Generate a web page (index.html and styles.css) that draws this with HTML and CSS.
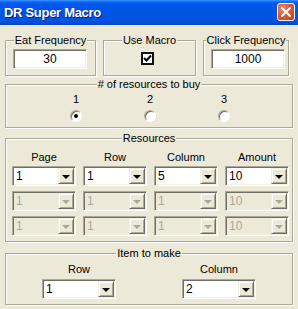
FILE: index.html
```html
<!DOCTYPE html>
<html lang="en">
<head>
    <meta charset="UTF-8">
    <meta name="viewport" content="width=device-width, initial-scale=1.0">
    <title>DR Super Macro</title>
    <link rel="stylesheet" href="styles.css">
</head>
<body>
    <div class="titlebar">
        <span class="title">DR Super Macro</span>
        <span class="close-btn">
            <svg width="10" height="10" viewBox="0 0 10 10"><path d="M1 1 L9 9 M9 1 L1 9" stroke="#fff" stroke-width="2" stroke-linecap="square"/></svg>
        </span>
    </div>

    <div class="client">
        <div class="top-row">
            <fieldset class="group group-eat">
                <legend>Eat Frequency</legend>
                <div class="edit">30</div>
            </fieldset>
            <fieldset class="group group-use">
                <legend>Use Macro</legend>
                <div class="checkbox">
                    <svg width="9" height="9" viewBox="0 0 9 9"><path d="M1 4 L3.5 6.5 L8 1.5" stroke="#000" stroke-width="2" fill="none"/></svg>
                </div>
            </fieldset>
            <fieldset class="group group-click">
                <legend>Click Frequency</legend>
                <div class="edit">1000</div>
            </fieldset>
        </div>

        <fieldset class="group group-buy">
            <legend># of resources to buy</legend>
            <div class="radio-grid">
                <div class="radio-item"><span class="caption">1</span><span class="radio checked"></span></div>
                <div class="radio-item"><span class="caption">2</span><span class="radio"></span></div>
                <div class="radio-item"><span class="caption">3</span><span class="radio"></span></div>
            </div>
        </fieldset>

        <fieldset class="group group-res">
            <legend>Resources</legend>
            <div class="res-grid">
                <span class="caption">Page</span>
                <span class="caption">Row</span>
                <span class="caption">Column</span>
                <span class="caption">Amount</span>

                <div class="combo"><span class="combo-text">1</span><span class="combo-btn"><i class="arrow"></i></span></div>
                <div class="combo"><span class="combo-text">1</span><span class="combo-btn"><i class="arrow"></i></span></div>
                <div class="combo"><span class="combo-text">5</span><span class="combo-btn"><i class="arrow"></i></span></div>
                <div class="combo"><span class="combo-text">10</span><span class="combo-btn"><i class="arrow"></i></span></div>

                <div class="combo disabled"><span class="combo-text">1</span><span class="combo-btn"><i class="arrow"></i></span></div>
                <div class="combo disabled"><span class="combo-text">1</span><span class="combo-btn"><i class="arrow"></i></span></div>
                <div class="combo disabled"><span class="combo-text">1</span><span class="combo-btn"><i class="arrow"></i></span></div>
                <div class="combo disabled"><span class="combo-text">10</span><span class="combo-btn"><i class="arrow"></i></span></div>

                <div class="combo disabled"><span class="combo-text">1</span><span class="combo-btn"><i class="arrow"></i></span></div>
                <div class="combo disabled"><span class="combo-text">1</span><span class="combo-btn"><i class="arrow"></i></span></div>
                <div class="combo disabled"><span class="combo-text">1</span><span class="combo-btn"><i class="arrow"></i></span></div>
                <div class="combo disabled"><span class="combo-text">10</span><span class="combo-btn"><i class="arrow"></i></span></div>
            </div>
        </fieldset>

        <fieldset class="group group-item">
            <legend>Item to make</legend>
            <div class="item-grid">
                <span class="caption">Row</span>
                <span class="caption">Column</span>
                <div class="combo"><span class="combo-text">1</span><span class="combo-btn"><i class="arrow"></i></span></div>
                <div class="combo"><span class="combo-text">2</span><span class="combo-btn"><i class="arrow"></i></span></div>
            </div>
        </fieldset>
    </div>
</body>
</html>
```

FILE: styles.css
```css
html, body {
    margin: 0;
    padding: 0;
}
body {
    width: 298px;
    height: 309px;
    overflow: hidden;
    background: #ECE9D8;
    font-family: "Liberation Sans", Arial, sans-serif;
    font-size: 11px;
    color: #000;
}

/* title bar */
.titlebar {
    height: 25px;
    display: flex;
    align-items: center;
    justify-content: space-between;
    padding: 0 3px 0 4px;
    box-sizing: border-box;
    background: linear-gradient(to bottom, #3D95FF 0, #0A66F5 2px, #0058EE 4px, #0055E6 40%, #0053E1 80%, #0049D0 100%);
}
.title {
    color: #fff;
    font-weight: bold;
    font-size: 13px;
    letter-spacing: -0.3px;
    text-shadow: 1px 1px 0 #0A1883;
    margin-top: -1px;
}
.close-btn {
    width: 18px;
    height: 18px;
    box-sizing: border-box;
    border: 1px solid #fff;
    border-radius: 3px;
    background: radial-gradient(circle at 30% 30%, #E9896E 0, #DB5A36 45%, #C63F17 100%);
    display: flex;
    align-items: center;
    justify-content: center;
    margin-top: -1px;
}

/* client area */
.client {
    padding: 9px 5px 0 5px;
}
.top-row {
    display: flex;
    align-items: flex-start;
}

.group {
    margin: 0;
    padding: 0;
    min-width: 0;
    border: 1px solid #ACA899;
    box-shadow: inset 1px 1px 0 #fff, 1px 1px 0 #fff;
}
.group legend {
    margin: 0 auto;
    padding: 0 1px;
    line-height: 13px;
    white-space: nowrap;
    background: #ECE9D8;
}

.group-eat,
.group-use,
.group-click {
    box-sizing: border-box;
    padding: 2px 0 6px 0;
}
.group-eat { width: 91px; }
.group-use { width: 93px; margin-left: 7px; }
.group-click { width: 86px; margin-left: 7px; }

.edit {
    width: 74px;
    height: 20px;
    margin-left: 7px;
    box-sizing: border-box;
    background: #fff;
    border: 1px solid;
    border-color: #ACA899 #fff #fff #ACA899;
    box-shadow: inset 1px 1px 0 #716F64, inset -1px -1px 0 #F1EFE2;
    text-align: center;
    line-height: 18px;
    font-size: 12px;
}

.checkbox {
    width: 13px;
    height: 13px;
    box-sizing: border-box;
    border: 2px solid #111;
    background: #fff;
    margin: 3px 0 4px 37px;
    display: flex;
    align-items: center;
    justify-content: center;
}

.group-buy {
    margin-top: 2px;
    padding: 2px 0 5px 0;
}
.radio-grid {
    display: grid;
    grid-template-columns: 74px 74px 74px;
    margin-left: 33px;
}
.radio-item {
    display: flex;
    flex-direction: column;
    align-items: center;
}
.caption {
    line-height: 13px;
    text-align: center;
}
.radio {
    width: 12px;
    height: 12px;
    box-sizing: border-box;
    margin-top: 4px;
    border-radius: 50%;
    background: #fff;
    border: 1px solid;
    border-color: #ACA899 #fff #fff #ACA899;
    box-shadow: inset 1px 1px 0 #716F64;
    display: flex;
    align-items: center;
    justify-content: center;
}
.radio.checked::after {
    content: "";
    width: 4px;
    height: 4px;
    border-radius: 50%;
    background: #000;
}

.group-res {
    margin-top: 4px;
    padding: 6px 0 5px 0;
}
.res-grid {
    display: grid;
    grid-template-columns: repeat(4, 64px);
    column-gap: 7px;
    row-gap: 5px;
    margin-left: 6px;
}
.res-grid .caption {
    margin-bottom: -3px;
}

.group-item {
    margin-top: 5px;
    padding: 3px 0 5px 0;
}
.item-grid {
    display: grid;
    grid-template-columns: 74px 74px;
    column-gap: 66px;
    row-gap: 3px;
    margin-left: 36px;
}

/* combo boxes */
.combo {
    height: 20px;
    box-sizing: border-box;
    display: flex;
    background: #fff;
    border: 1px solid;
    border-color: #ACA899 #fff #fff #ACA899;
    box-shadow: inset 1px 1px 0 #716F64, inset -1px -1px 0 #F1EFE2;
    padding: 1px;
}
.combo-text {
    flex: 1;
    padding-left: 2px;
    font-size: 12px;
    line-height: 16px;
}
.combo-btn {
    width: 16px;
    height: 16px;
    box-sizing: border-box;
    background: #ECE9D8;
    border: 1px solid;
    border-color: #F1EFE2 #716F64 #716F64 #F1EFE2;
    box-shadow: inset 1px 1px 0 #fff, inset -1px -1px 0 #ACA899;
    display: flex;
    align-items: center;
    justify-content: center;
}
.arrow {
    width: 0;
    height: 0;
    border-left: 4px solid transparent;
    border-right: 4px solid transparent;
    border-top: 4px solid #000;
    margin-top: 1px;
}
.combo.disabled {
    background: #ECE9D8;
}
.combo.disabled .combo-text {
    color: #ACA899;
}
.combo.disabled .arrow {
    border-top-color: #ACA899;
}
```
